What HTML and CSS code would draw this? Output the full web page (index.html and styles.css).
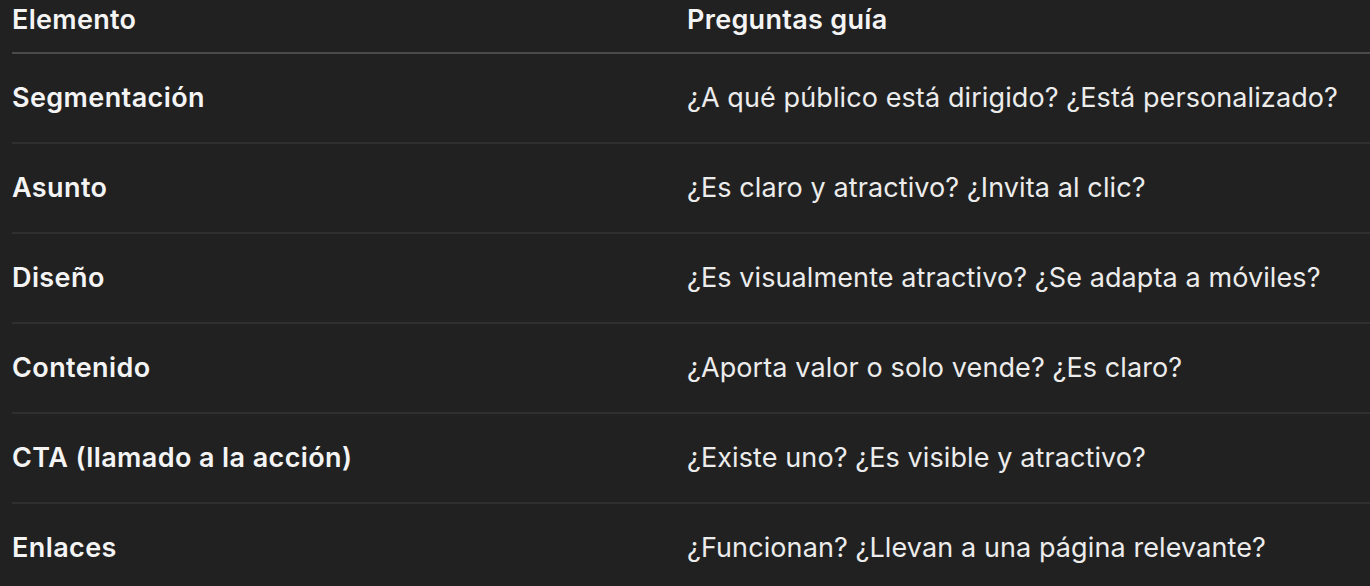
FILE: index.html
```html
<!DOCTYPE html>
<html lang="es">
<head>
    <meta charset="UTF-8">
    <meta name="viewport" content="width=device-width, initial-scale=1.0">
    <title>Checklist de email marketing</title>
    <link rel="stylesheet" href="styles.css">
</head>
<body>
    <table class="guide-table">
        <thead>
            <tr>
                <th>Elemento</th>
                <th>Preguntas guía</th>
            </tr>
        </thead>
        <tbody>
            <tr>
                <td>Segmentación</td>
                <td>¿A qué público está dirigido? ¿Está personalizado?</td>
            </tr>
            <tr>
                <td>Asunto</td>
                <td>¿Es claro y atractivo? ¿Invita al clic?</td>
            </tr>
            <tr>
                <td>Diseño</td>
                <td>¿Es visualmente atractivo? ¿Se adapta a móviles?</td>
            </tr>
            <tr>
                <td>Contenido</td>
                <td>¿Aporta valor o solo vende? ¿Es claro?</td>
            </tr>
            <tr>
                <td>CTA (llamado a la acción)</td>
                <td>¿Existe uno? ¿Es visible y atractivo?</td>
            </tr>
            <tr>
                <td>Enlaces</td>
                <td>¿Funcionan? ¿Llevan a una página relevante?</td>
            </tr>
        </tbody>
    </table>
</body>
</html>
```

FILE: styles.css
```css
body {
    margin: 0;
    background-color: #212121;
    font-family: Inter, 'Noto Sans', sans-serif;
    color: #ececec;
    overflow: hidden;
}

.guide-table {
    margin-left: 12px;
    width: calc(100% - 12px);
    border-collapse: collapse;
    font-size: 27px;
    line-height: 36px;
    letter-spacing: 0.1px;
    text-align: left;
}

.guide-table th {
    font-weight: 600;
    color: #f4f4f4;
    letter-spacing: 0.3px;
    padding: 2px 0 14px 0;
    border-bottom: 2px solid #4a4a4a;
}

.guide-table th:first-child {
    width: 675px;
}

.guide-table td {
    padding: 26px 0;
    border-bottom: 2px solid #2f2f2f;
}

.guide-table td:first-child {
    font-weight: 600;
    color: #f4f4f4;
    letter-spacing: 0.4px;
}

.guide-table tr:last-child td {
    border-bottom: none;
}
```
